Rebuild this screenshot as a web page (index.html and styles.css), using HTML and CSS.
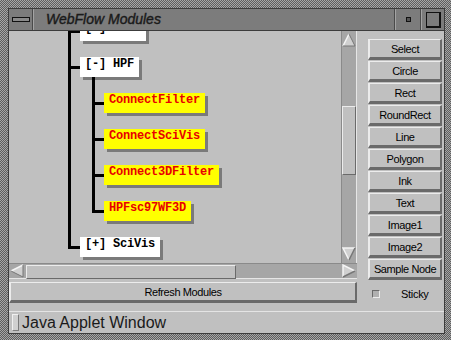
FILE: index.html
```html
<!DOCTYPE html>
<html lang="en">
<head>
  <meta charset="UTF-8" />
  <title>WebFlow Modules</title>
  <link rel="stylesheet" href="styles.css">
</head>
<body>
<div class="frame">
  <div class="window">
    <div class="titlebar">
      <div class="tb-btn tb-menu"><span class="dash"></span></div>
      <div class="title">WebFlow Modules</div>
      <div class="tb-btn tb-min"><span class="dot"></span></div>
      <div class="tb-btn tb-max"><span class="box"></span></div>
    </div>

    <div class="client">
      <div class="main">
        <div class="scrollpane">
          <div class="viewport">
            <ul class="tree">
              <li><span class="node">[+] Cell</span></li>
              <li><span class="node">[-] HPF</span>
                <ul>
                  <li><span class="node module">ConnectFilter</span></li>
                  <li><span class="node module">ConnectSciVis</span></li>
                  <li><span class="node module">Connect3DFilter</span></li>
                  <li><span class="node module">HPFsc97WF3D</span></li>
                </ul>
              </li>
              <li><span class="node">[+] SciVis</span></li>
            </ul>
          </div>
          <div class="vscroll">
            <svg class="arrow" width="14" height="14" viewBox="0 0 14 14"><polygon points="7,1 13,13 1,13" fill="#d0d0d0"/><polyline points="1,13 7,1" stroke="#f4f4f4" stroke-width="1.5" fill="none"/><polyline points="7,1 13,13 1,13" stroke="#777" stroke-width="1" fill="none"/></svg>
            <div class="track"><div class="thumb v-thumb"></div></div>
            <svg class="arrow" width="14" height="14" viewBox="0 0 14 14"><polygon points="1,1 13,1 7,13" fill="#d0d0d0"/><polyline points="7,13 1,1 13,1" stroke="#f4f4f4" stroke-width="1.5" fill="none"/><polyline points="13,1 7,13" stroke="#777" stroke-width="1.5" fill="none"/></svg>
          </div>
          <div class="hscroll">
            <svg class="arrow" width="14" height="14" viewBox="0 0 14 14"><polygon points="1,7 13,1 13,13" fill="#d0d0d0"/><polyline points="13,1 1,7" stroke="#f4f4f4" stroke-width="1.5" fill="none"/><polyline points="1,7 13,13 13,1" stroke="#777" stroke-width="1" fill="none"/></svg>
            <div class="track"><div class="thumb h-thumb"></div></div>
            <svg class="arrow" width="14" height="14" viewBox="0 0 14 14"><polygon points="1,1 13,7 1,13" fill="#d0d0d0"/><polyline points="1,13 1,1 13,7" stroke="#f4f4f4" stroke-width="1.5" fill="none"/><polyline points="13,7 1,13" stroke="#777" stroke-width="1.5" fill="none"/></svg>
          </div>
        </div>
        <button class="btn refresh">Refresh Modules</button>
      </div>

      <div class="tools">
        <button class="btn">Select</button>
        <button class="btn">Circle</button>
        <button class="btn">Rect</button>
        <button class="btn">RoundRect</button>
        <button class="btn">Line</button>
        <button class="btn">Polygon</button>
        <button class="btn">Ink</button>
        <button class="btn">Text</button>
        <button class="btn">Image1</button>
        <button class="btn">Image2</button>
        <button class="btn">Sample Node</button>
        <label class="sticky"><span class="check"></span>Sticky</label>
      </div>
    </div>

    <div class="status"><span class="ind"></span>Java Applet Window</div>
  </div>
</div>
</body>
</html>
```

FILE: styles.css
```css
body { margin: 0; background: #8a8a8a; }

.frame {
  width: 451px; height: 340px; box-sizing: border-box;
  padding: 8px 6px 6px 8px;
  background: repeating-conic-gradient(#5e5e5e 0 25%, #a6a6a6 0 50%) 0 0 / 2px 2px;
}
.window {
  height: 100%; box-sizing: border-box;
  border: 1px solid #3c3c3c;
  display: flex; flex-direction: column;
  background: #c0c0c0;
}

/* title bar */
.titlebar {
  height: 21px; display: flex;
  background: #7c7c7c;
  border-bottom: 1px solid #3c3c3c;
}
.tb-btn {
  display: flex; align-items: center; justify-content: center;
  border-left: 1px solid #a4a4a4; border-right: 1px solid #4a4a4a;
}
.tb-menu { width: 23px; border-left: none; }
.tb-min { width: 24px; }
.tb-max { width: 22px; border-right: none; }
.dash { width: 16px; height: 3px; border: 1px solid #111; background: #8a8a8a; }
.dot { width: 3px; height: 3px; border: 1px solid #111; background: #555; }
.box { width: 12px; height: 13px; border: 1px solid #111; border-right-width: 2px; border-bottom-width: 2px; }
.title {
  flex: 1; padding-left: 12px;
  font: italic 14px "Liberation Sans", Arial, sans-serif;
  -webkit-text-stroke: 0.4px #1a1a1a;
  color: #1a1a1a; line-height: 21px;
  border-left: 1px solid #a4a4a4; border-right: 1px solid #4a4a4a;
}

/* client area */
.client { flex: 1; display: flex; }
.main { width: 348px; display: flex; flex-direction: column; }

.scrollpane {
  display: grid;
  grid-template-columns: 332px 16px;
  grid-template-rows: 232px 16px;
}
.viewport { overflow: hidden; background: #c0c0c0; }

/* tree */
.tree, .tree ul { list-style: none; margin: 0; padding: 0; }
.tree { margin: -26px 0 0 59px; }
.tree ul { margin-left: 12px; }
.tree li { position: relative; padding: 16px 0 0 12px; }
.tree li::before {
  content: ""; position: absolute; left: 0; top: 0;
  width: 9px; height: 25px;
  border-left: 3px solid #000; border-bottom: 3px solid #000;
}
.tree li::after {
  content: ""; position: absolute; left: 0; top: 0; bottom: 0;
  border-left: 3px solid #000;
}
.tree li:last-child::after { display: none; }

.node {
  display: block; width: max-content; height: 20px; line-height: 20px;
  padding: 0 5px;
  background: #fff; color: #000;
  font: bold 12px "Liberation Mono", "Courier New", monospace;
  letter-spacing: -0.2px;
  box-shadow: 3px 3px 0 #7a7a7a;
}
.node.module { background: #ffff00; color: #e80000; }

/* scrollbars */
.vscroll, .hscroll {
  background: #a6a6a6;
  display: flex; align-items: center;
  box-sizing: border-box;
}
.vscroll {
  flex-direction: column; padding: 2px 1px;
  border-left: 1px solid #8a8a8a; border-right: 1px solid #e6e6e6;
}
.hscroll {
  grid-column: 1 / 3; padding: 1px 1px;
  border-top: 1px solid #8a8a8a; border-bottom: 1px solid #e6e6e6;
}
.arrow { flex: none; display: block; }
.track { flex: 1; position: relative; }
.vscroll .track { width: 14px; }
.hscroll .track { height: 14px; align-self: stretch; }
.thumb {
  background: #c0c0c0; box-sizing: border-box;
  border: 1px solid; border-color: #ececec #6a6a6a #6a6a6a #ececec;
}
.v-thumb { margin-top: 59px; height: 69px; }
.h-thumb { margin-left: 2px; width: 210px; height: 14px; }

/* buttons */
.btn {
  display: block; box-sizing: border-box;
  background: #c0c0c0; color: #000;
  border: 2px solid; border-color: #ececec #6a6a6a #6a6a6a #ececec;
  border-top-width: 1px; border-bottom-width: 3px;
  font: 11px "Liberation Sans", Arial, sans-serif;
  letter-spacing: -0.4px; white-space: nowrap;
  padding: 0; margin: 0;
}
.refresh { height: 21px; margin-top: 3px; width: 348px; }

.tools { flex: 1; padding: 8px 2px 0 11px; display: flex; flex-direction: column; }
.tools .btn { height: 21px; margin-bottom: 1px; width: 74px; }

.sticky {
  display: flex; align-items: center; margin-top: 7px;
  font: 11px "Liberation Sans", Arial, sans-serif;
  letter-spacing: -0.3px;
}
.check {
  width: 8px; height: 8px; margin: 0 21px 0 4px; box-sizing: border-box;
  background: #b0b0b0;
  border: 1px solid; border-color: #6a6a6a #ececec #ececec #6a6a6a;
}

/* status line */
.status {
  height: 21px; display: flex; align-items: center;
  border-top: 1px solid #e4e4e4;
  font: 16px "Liberation Sans", Arial, sans-serif; color: #1a1a1a;
}
.ind {
  width: 5px; height: 15px; margin: 0 3px 0 3px;
  background: #d0d0d0; border: 1px solid; border-color: #f0f0f0 #7a7a7a #7a7a7a #f0f0f0;
}
```
